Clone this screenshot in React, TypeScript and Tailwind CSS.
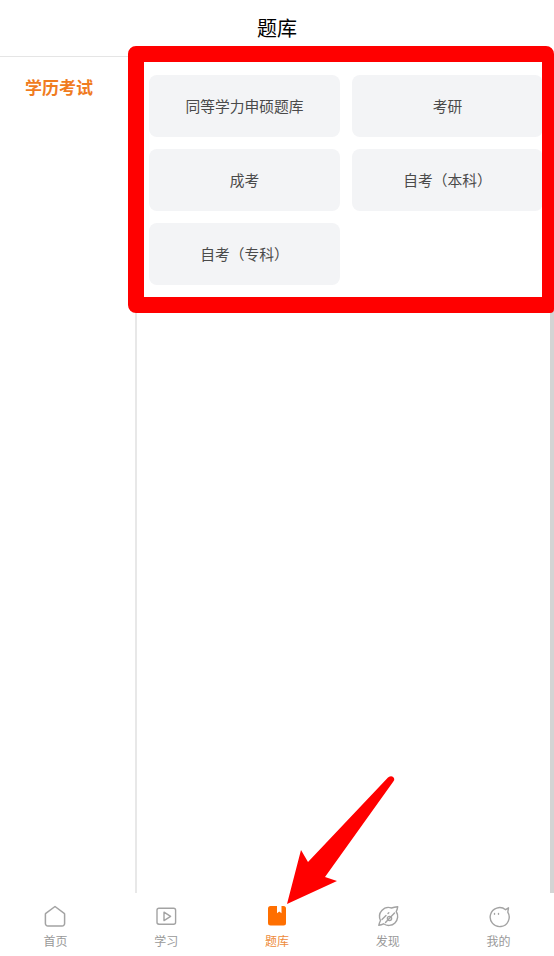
const subjects = [
  "同等学力申硕题库",
  "考研",
  "成考",
  "自考（本科）",
  "自考（专科）",
];

const HomeIcon = () => (
  <svg width="24" height="24" viewBox="0 0 24 24" fill="none" stroke="#a3a3a3" strokeWidth="1.5">
    <path d="M12 1.5 L21.2 8.4 a1 1 0 0 1 .4 .8 V18.5 a2.5 2.5 0 0 1 -2.5 2.5 H4.9 a2.5 2.5 0 0 1 -2.5 -2.5 V9.2 a1 1 0 0 1 .4 -.8 Z" strokeLinejoin="round" />
  </svg>
);

const PlayIcon = () => (
  <svg width="24" height="24" viewBox="0 0 24 24" fill="none" stroke="#a3a3a3" strokeWidth="1.4">
    <rect x="3" y="3.2" width="18.6" height="16" rx="2" />
    <path d="M10 7.2 L16.6 11.4 L10 15.6 Z" strokeLinejoin="round" />
  </svg>
);

const BookIcon = () => (
  <svg width="24" height="24" viewBox="0 0 24 24">
    <rect x="3" y="1" width="18" height="19.5" rx="2.5" fill="#ff6f00" />
    <path d="M12 1 H16.5 V8.2 L14.25 6.6 L12 8.2 Z" fill="#fff" />
  </svg>
);

const DiscoverIcon = () => (
  <svg width="24" height="24" viewBox="0 0 24 24" fill="none" stroke="#a3a3a3" strokeWidth="1.4" strokeLinecap="round" strokeLinejoin="round">
    <path d="M15.5 3 A9 9 0 0 0 4.5 15.5 C3.5 17.5 2.8 20.3 2.8 20.3 C2.8 20.3 5.5 19.8 7.5 18.8 A9 9 0 0 0 20.2 6.5 C21.3 4.5 21.7 1.8 21.7 1.8 C21.7 1.8 18 2 15.5 3 Z" />
    <path d="M6 14.5 L10 10.5" />
    <path d="M12 8.5 L12.8 7.7" />
    <path d="M9.5 17.5 L18.5 8" />
    <circle cx="13.5" cy="13.5" r="2.1" />
  </svg>
);

const MineIcon = () => (
  <svg width="24" height="24" viewBox="0 0 24 24" fill="none" stroke="#a3a3a3" strokeWidth="1.4" strokeLinecap="round" strokeLinejoin="round">
    <path d="M18.6 4.7 L21.5 2.8 L20.8 7.2 A9.5 9.5 0 1 1 18.6 4.7 Z" />
    <path d="M7.5 8.4 V9.2" />
    <path d="M11.5 8.4 V9.2" />
  </svg>
);

const tabs = [
  { label: "首页", icon: <HomeIcon /> },
  { label: "学习", icon: <PlayIcon /> },
  { label: "题库", icon: <BookIcon />, active: true },
  { label: "发现", icon: <DiscoverIcon /> },
  { label: "我的", icon: <MineIcon /> },
];

export default function App() {
  return (
    <div className="relative flex h-[956px] w-[554px] flex-col overflow-hidden bg-white font-['Noto_Sans_CJK_SC',sans-serif]">
      <header className="flex h-[57px] shrink-0 items-center justify-center border-b border-[#e5e5e5] text-[20px] text-black">
        题库
      </header>

      <div className="flex min-h-0 flex-1">
        <aside className="w-[137px] shrink-0 border-r-2 border-[#e8e8e8] pl-[25px] pt-[18px]">
          <span className="text-[17px] leading-6 font-bold text-[#f07c1f]">学历考试</span>
        </aside>
        <main className="flex-1 border-r-4 border-[#d4d4d4] pl-3 pr-[7px] pt-[18px]">
          <div className="grid grid-cols-2 gap-3">
            {subjects.map((subject) => (
              <div
                key={subject}
                className="flex h-[62px] items-center justify-center rounded-lg bg-[#f3f4f6] text-[14.75px] text-[#4a4a4a]"
              >
                {subject}
              </div>
            ))}
          </div>
        </main>
      </div>

      <nav className="flex h-[63px] shrink-0 bg-white">
        {tabs.map((tab) => (
          <div key={tab.label} className="flex flex-1 flex-col items-center pt-[12px]">
            {tab.icon}
            <span className={`mt-[3px] text-xs leading-[18px] ${tab.active ? "text-[#ee8a3a]" : "text-[#999]"}`}>
              {tab.label}
            </span>
          </div>
        ))}
      </nav>

      {/* annotations painted on top of the screenshot */}
      <div className="absolute left-[128px] top-[46px] h-[267px] w-[426px] rounded-lg rounded-br-sm border-[16px] border-r-[12px] border-[#ff0000]" />
      <svg className="absolute left-[280px] top-[770px]" width="120" height="140" viewBox="280 770 120 140">
        <path d="M287 904 L301 850 L308 862 L388 777.5 Q392 775 394 778 Q395 780 393 782 L325 877 L337 881 Z" fill="#ff0000" />
      </svg>
    </div>
  );
}
